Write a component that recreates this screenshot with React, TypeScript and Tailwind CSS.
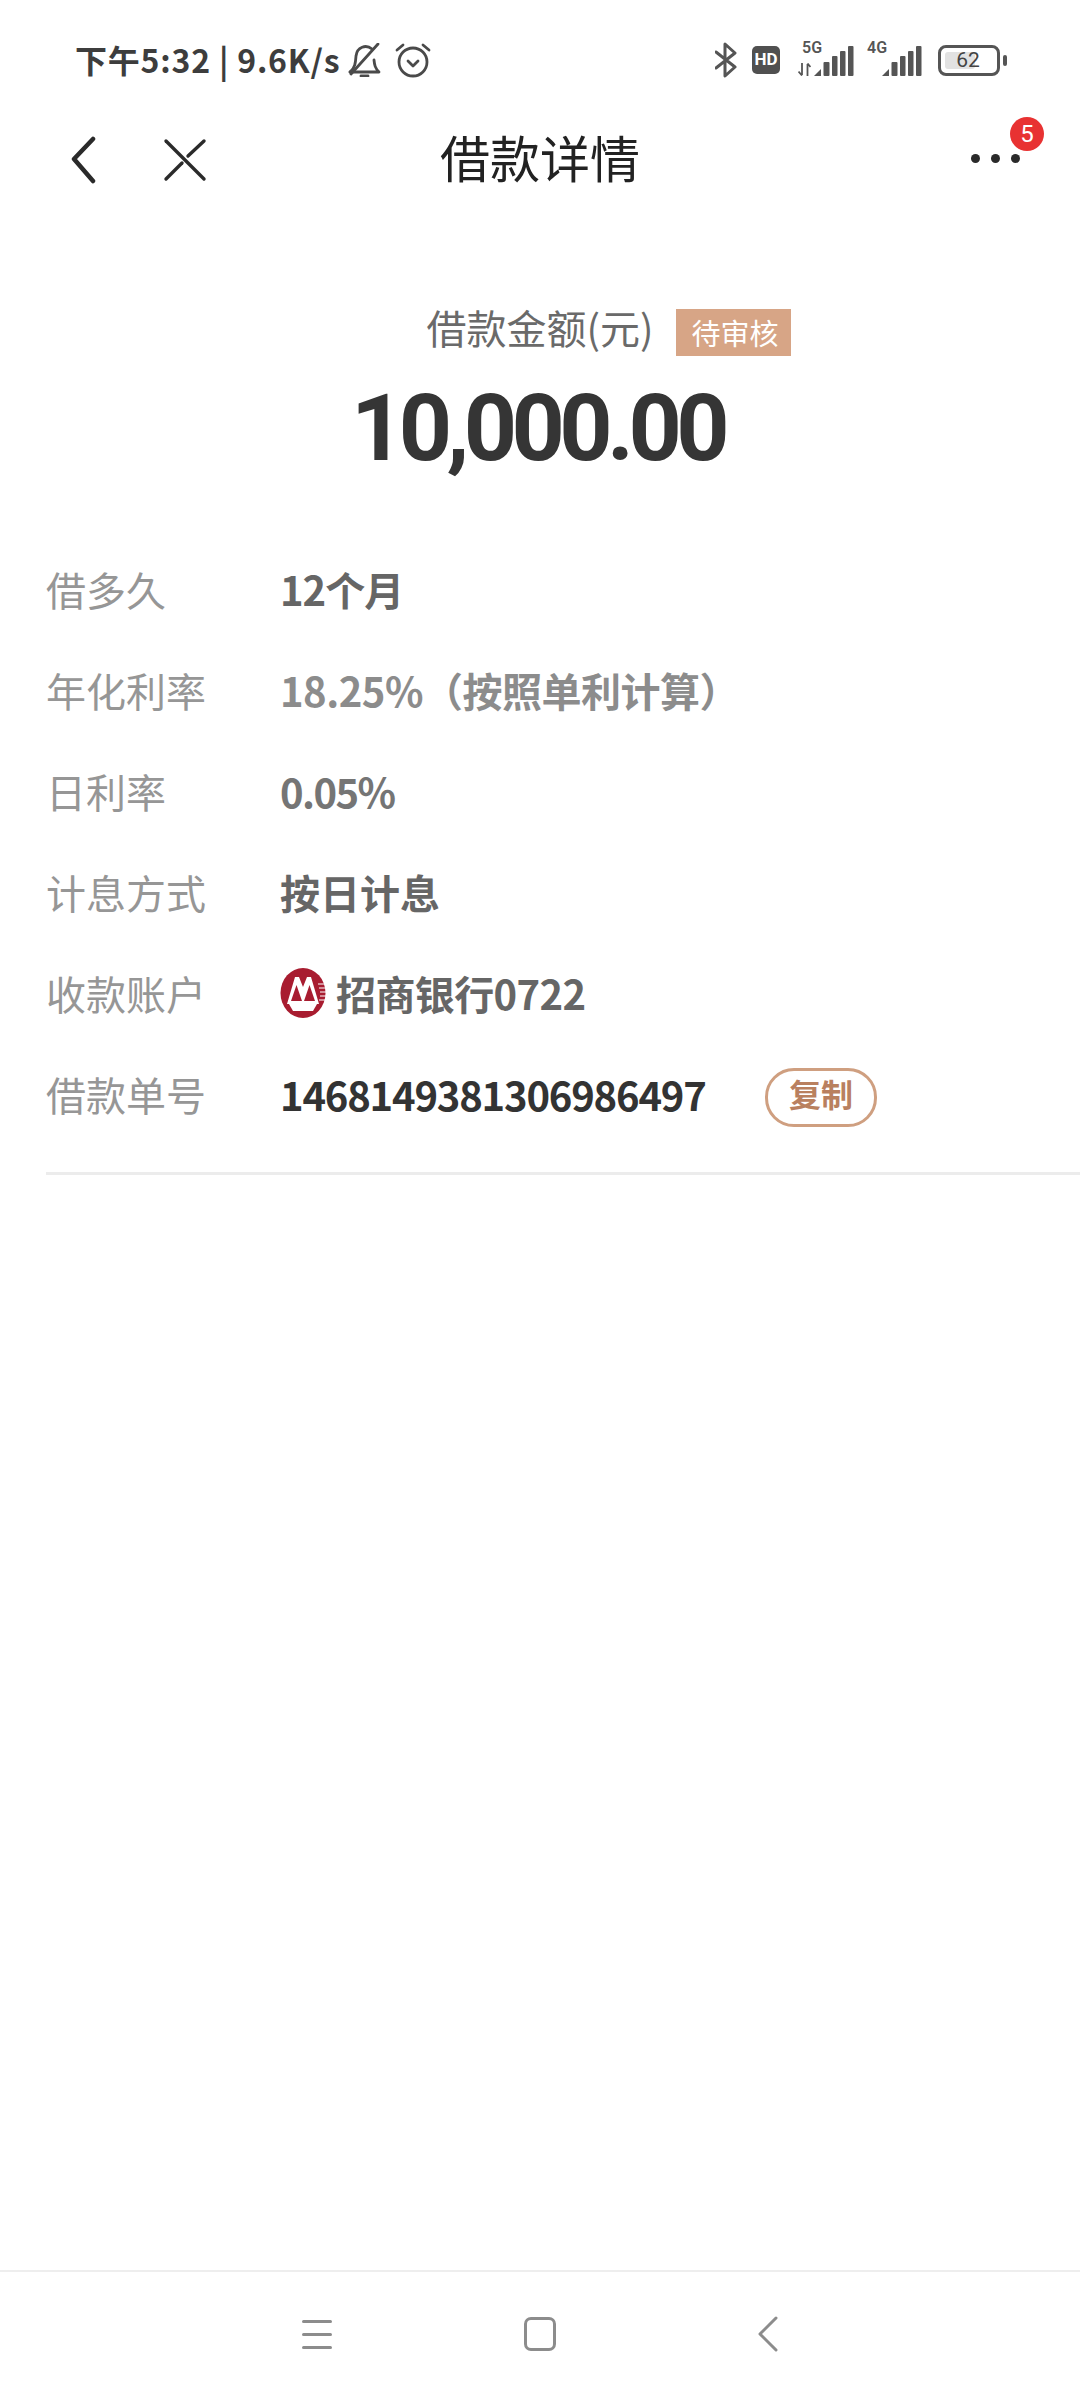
const CJK = 'font-["Noto_Sans_CJK_SC",sans-serif]';

const ROWS = [
  { label: '借多久', value: '12个月', color: 'text-[#666666] tracking-[-1px]' },
  { label: '年化利率', value: '18.25%（按照单利计算）', color: 'text-[#8c8c8c] tracking-[-0.5px]' },
  { label: '日利率', value: '0.05%', color: 'text-[#757575] tracking-[-1.6px]' },
  { label: '计息方式', value: '按日计息', color: 'text-[#666666] tracking-[0px]' },
];

function Bars({ className }: { className: string }) {
  return (
    <svg className={className} viewBox="0 0 40 30" fill="#555555">
      <path d="M0 30 L7 23 V30 Z" />
      <rect x="9.5" y="16" width="6" height="14" rx="1" />
      <rect x="18" y="10" width="5.5" height="20" rx="1" />
      <rect x="26" y="5" width="5.5" height="25" rx="1" />
      <rect x="34" y="0" width="5.5" height="30" rx="1" />
    </svg>
  );
}

function StatusBar() {
  return (
    <div className="h-[120px] flex items-center pl-[75px] pr-[73px] text-[#3d3d3d]">
      <span className="pb-[3px] text-[32px] leading-none font-semibold tracking-[0.8px] whitespace-nowrap">下午5:32 | 9.6K/s</span>
      <svg className="ml-[8px] w-[34px] h-[34px]" viewBox="0 0 34 34" fill="none" stroke="#4a4a4a" strokeWidth="2.8" strokeLinecap="round" strokeLinejoin="round">
        <path d="M2 29 H31 C27 25 26.5 22 26 17" />
        <path d="M24 6 C18 1 9 4 8 13 C7.5 20 7 25 2 29" />
        <path d="M3 31 L30 1" />
        <path d="M13 33 H20" />
      </svg>
      <svg className="ml-[13px] w-[36px] h-[36px]" viewBox="0 0 36 36" fill="none" stroke="#4a4a4a" strokeWidth="2.8" strokeLinecap="round" strokeLinejoin="round">
        <circle cx="18" cy="20" r="14" />
        <path d="M13 19 L18 24 L23 19" />
        <path d="M2 8 L8 3" />
        <path d="M34 8 L28 3" />
      </svg>
      <div className="flex-1" />
      <svg className="w-[22px] h-[36px]" viewBox="0 0 22 36" fill="none" stroke="#555555" strokeWidth="3" strokeLinejoin="round" strokeLinecap="round">
        <path d="M1 10 L20 25 L10 34 V2 L20 11 L1 26" />
      </svg>
      <div className="ml-[15px] w-[28px] h-[28px] rounded-[5px] bg-[#505050] text-white text-[17px] font-bold flex items-center justify-center font-['Roboto',sans-serif]">HD</div>
      <div className="relative ml-[18px] w-[56px] h-[32px]">
        <span className="absolute left-[4px] -top-[3px] text-[16px] leading-[14px] font-semibold text-[#555555] font-['Roboto',sans-serif]">5G</span>
        <svg className="absolute left-0 bottom-0 w-[13px] h-[13px]" viewBox="0 0 13 13" fill="none" stroke="#555555" strokeWidth="1.8">
          <path d="M4 0 V12 M0.5 8.5 L4 12.5" />
          <path d="M9.5 13 V1 M9.5 0.5 L12.5 4" />
        </svg>
        <Bars className="absolute right-0 bottom-0 w-[40px] h-[30px]" />
      </div>
      <div className="relative ml-[13px] w-[55px] h-[32px]">
        <span className="absolute left-0 -top-[3px] text-[16px] leading-[14px] font-semibold text-[#555555] font-['Roboto',sans-serif]">4G</span>
        <Bars className="absolute right-0 bottom-0 w-[40px] h-[30px]" />
      </div>
      <div className="relative ml-[16px] mr-[7px] w-[62px] h-[31px] rounded-[8px] border-[3px] border-[#555555] flex items-center justify-center">
        <div className="absolute left-[4px] top-[4px] bottom-[4px] w-[30px] rounded-[3px] bg-[#e2e2e2]" />
        <span className="relative text-[21px] leading-none text-[#444444] font-['Roboto',sans-serif] ml-[-2px]">62</span>
        <div className="absolute -right-[10px] top-[7px] w-[4px] h-[11px] rounded-[2px] bg-[#555555]" />
      </div>
    </div>
  );
}

function NavBar() {
  return (
    <div className="relative h-[80px] flex items-center justify-center">
      <svg className="absolute left-[71px] top-[16px] w-[25px] h-[48px]" viewBox="0 0 25 48" fill="none" stroke="#2a2a2a" strokeWidth="4.5" strokeLinecap="round" strokeLinejoin="round">
        <path d="M22 3 L3 23 L22 45" />
      </svg>
      <svg className="absolute left-[163px] top-[18px] w-[44px] h-[44px]" viewBox="0 0 44 44" fill="none" stroke="#2a2a2a" strokeWidth="3.4" strokeLinecap="round">
        <path d="M3 3 L41 41" />
        <path d="M3 41 L19 25" />
        <path d="M25 18 L41 3" />
      </svg>
      <span className="pb-[8px] text-[50px] leading-none text-[#222222]">借款详情</span>
      <div className="absolute left-[971px] top-[34px] flex gap-[11px]">
        <span className="w-[9px] h-[9px] rounded-full bg-[#2a2a2a]" />
        <span className="w-[9px] h-[9px] rounded-full bg-[#2a2a2a]" />
        <span className="w-[9px] h-[9px] rounded-full bg-[#2a2a2a]" />
      </div>
      <div className="absolute left-[1010px] -top-[3px] w-[34px] h-[34px] rounded-full bg-[#e83232] text-white text-[24px] leading-none flex items-center justify-center font-['Roboto',sans-serif]">5</div>
    </div>
  );
}

function CmbLogo() {
  return (
    <svg className="w-[46px] h-[50px] shrink-0" viewBox="0 0 46 50">
      <ellipse cx="23" cy="25" rx="22.5" ry="25" fill="#a81c30" />
      <path d="M7 36 L15 9 H19 L23 19 L27 9 H31 L39 36 Z" fill="#ffffff" />
      <path d="M11 33 L16.5 17 L22 33 Z M35 33 L29.5 17 L24 33 Z" fill="#a81c30" />
      <path d="M9 36 H37 L33 43 H13 Z" fill="#ffffff" />
      <path d="M38 16 H46 M39 20 H46 M40 24 H46 M40 28 H46 M39 32 H46" stroke="#ffffff" strokeWidth="1.2" />
    </svg>
  );
}

function NavKeys() {
  return (
    <div className="relative h-[130px] border-t-2 border-[#eeeeee]">
      <div className="absolute left-[302px] top-[48px] w-[30px] flex flex-col gap-[10px]">
        <span className="h-[3px] bg-[#8c8c8c] rounded-full" />
        <span className="h-[3px] bg-[#8c8c8c] rounded-full" />
        <span className="h-[3px] bg-[#8c8c8c] rounded-full" />
      </div>
      <div className="absolute left-[524px] top-[45px] w-[32px] h-[34px] rounded-[7px] border-[3px] border-[#8c8c8c]" />
      <svg className="absolute left-[757px] top-[44px] w-[21px] h-[36px]" viewBox="0 0 21 36" fill="none" stroke="#8c8c8c" strokeWidth="3" strokeLinecap="round" strokeLinejoin="round">
        <path d="M19 2 L3 18 L19 34" />
      </svg>
    </div>
  );
}

export default function App() {
  return (
    <div className={`w-[1080px] h-[2400px] bg-white flex flex-col overflow-hidden ${CJK}`}>
      <StatusBar />
      <NavBar />

      <div className="flex-1 min-h-0">
        {/* amount */}
        <div className="pt-[104px] flex flex-col items-center">
          <div className="relative h-[50px] flex items-center">
            <span className="pb-[5px] text-[40px] leading-none text-[#6a6a6a]">借款金额(元)</span>
            <span className="absolute left-[250px] top-[5px] w-[115px] h-[47px] pl-[2px] bg-[#d7a586] text-white text-[29px] leading-none flex items-center justify-center whitespace-nowrap">待审核</span>
          </div>
          <div className="mt-[25px] mr-[5px] text-[93px] leading-[100px] font-bold tracking-[-5.6px] text-[#353535] font-['Roboto',sans-serif]">10,000.00</div>
        </div>

        {/* details */}
        <div className="mt-[59px] pl-[46px]">
          {ROWS.map(r => (
            <div key={r.label} className="h-[101px] flex items-center">
              <span className="w-[234px] text-[40px] leading-none text-[#969696]">{r.label}</span>
              <span className={`text-[40px] leading-none font-semibold ${r.color}`}>{r.value}</span>
            </div>
          ))}
          <div className="h-[101px] flex items-center">
            <span className="w-[234px] text-[40px] leading-none text-[#969696]">收款账户</span>
            <CmbLogo />
            <span className="ml-[10px] text-[40px] leading-none font-semibold tracking-[-0.6px] text-[#666666]">招商银行0722</span>
          </div>
          <div className="h-[102px] flex items-center">
            <span className="w-[234px] text-[40px] leading-none text-[#969696]">借款单号</span>
            <span className="w-[485px] text-[40px] leading-none font-semibold tracking-[-1.2px] text-[#333333]">1468149381306986497</span>
            <span className="mt-[7px] w-[112px] h-[59px] pb-[10px] rounded-[29px] border-[3px] border-[#cf9f80] text-[32px] leading-none font-bold text-[#b9805f] flex items-center justify-center">复制</span>
          </div>
          <div className="mt-[27px] h-[3px] bg-[#ececec]" />
        </div>
      </div>

      <NavKeys />
    </div>
  );
}
